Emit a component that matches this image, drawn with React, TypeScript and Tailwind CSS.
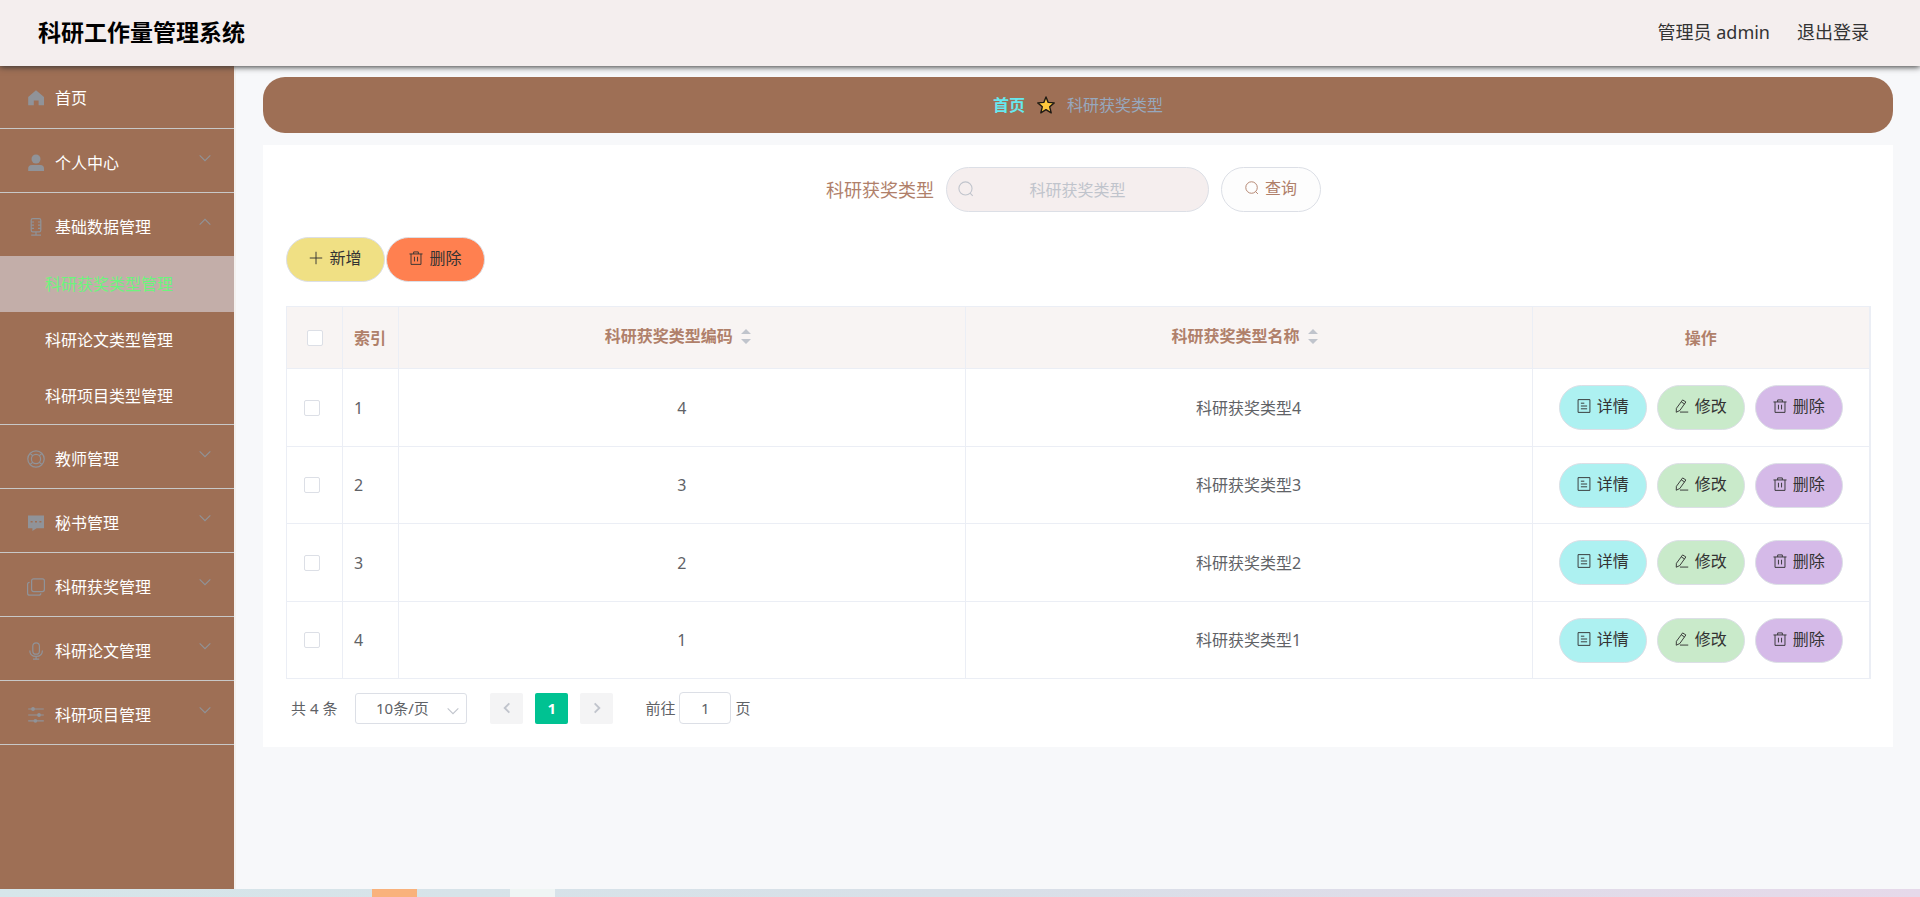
import type { ReactNode } from 'react';

function Svg({ children, className }: { children: ReactNode; className: string }) {
  return (
    <svg viewBox="0 0 18 18" className={className} fill="none" stroke="currentColor" strokeWidth="1.2" aria-hidden="true">
      {children}
    </svg>
  );
}

const icons = {
  home: <path d="M9 1.2 17 8v8.3h-5.4v-4.8H6.8v4.8H1.2V8z" fill="currentColor" stroke="none" />,
  user: (
    <g fill="currentColor" stroke="none">
      <circle cx="9" cy="5" r="4.5" />
      <path d="M1.2 17v-2.4a3.6 3.6 0 0 1 3.6-3.6h8.6a3.6 3.6 0 0 1 3.6 3.6V17z" />
    </g>
  ),
  mic: (
    <>
      <rect x="4.2" y=".6" width="9.6" height="13.2" rx="1.6" />
      <path d="M4.2 4h2.8M4.2 7.2h2.8M4.2 10.4h2.8M13.8 4H11M13.8 7.2H11M13.8 10.4H11M9 13.8v3M4.2 17.2h9.8" />
    </>
  ),
  help: (
    <>
      <circle cx="9" cy="9" r="8.2" />
      <circle cx="9" cy="9" r="4.6" />
      <path d="m3.2 3.6 2.6 2.2M14.8 3.6l-2.6 2.2M3.2 14.4l2.6-2.2M14.8 14.4l-2.6-2.2" />
    </>
  ),
  comment: (
    <path
      fillRule="evenodd"
      d="M1 1.4h16v12.8H9.6L5.4 17v-2.8H1zM3.6 7v1.6h2V7zm4.4 0v1.6h2V7zm4.4 0v1.6h2V7z"
      fill="currentColor"
      stroke="none"
    />
  ),
  copy: (
    <>
      <rect x="4.6" y=".8" width="12.8" height="12.8" rx="2" />
      <path d="M2.6 4.4C1.2 4.4.6 5 .6 6.4v8.8c0 1.4.6 2 2 2h9.2c1.4 0 2-.6 2-2" />
    </>
  ),
  voice: (
    <>
      <rect x="5.8" y=".8" width="6.6" height="11.4" rx="3.3" />
      <path d="M2.8 8.4c0 4 2.6 6 6.3 6s6.3-2 6.3-6M9.1 14.4v2.6M6 17.2h6.2" />
    </>
  ),
  sliders: (
    <>
      <path d="M1.2 3h15.6M1.2 9h15.6M1.2 14.8h15.6" />
      <g fill="currentColor" stroke="none">
        <circle cx="6" cy="3" r="1.9" />
        <circle cx="12" cy="9" r="1.9" />
        <circle cx="8.4" cy="14.8" r="1.9" />
      </g>
    </>
  ),
  search: (
    <>
      <circle cx="8.4" cy="8.4" r="7.4" />
      <path d="m13.6 13.6 3 3" />
    </>
  ),
  plus: <path d="M9 1v16M1 9h16" />,
  trash: <path d="M.6 3.8h16.8M6 3.8V1.2h6v2.6M2.6 3.8v13.4h12.8V3.8M7 7.4v6M11 7.4v6" />,
  detail: <path d="M1.4.8h15.2v16.4H1.4zM5 5.4h4.4M5 9h8M5 12.6h8" />,
  edit: <path d="M9.8 1.2 14 3.8 6.2 14.8 1.6 17l.2-5zM8.2 3.8l4.2 2.6M6.4 16.8H17" />,
  down: <path d="m1 5 8 8 8-8" strokeWidth="1.6" />,
  up: <path d="m1 13 8-8 8 8" strokeWidth="1.6" />,
  left: <path d="m12 3-6 6 6 6" strokeWidth="2.4" />,
  right: <path d="m6 3 6 6-6 6" strokeWidth="2.4" />,
};

type IconName = keyof typeof icons;

const menu: { label: string; icon: IconName; children?: string[] }[] = [
  { label: '个人中心', icon: 'user' },
  {
    label: '基础数据管理',
    icon: 'mic',
    children: ['科研获奖类型管理', '科研论文类型管理', '科研项目类型管理'],
  },
  { label: '教师管理', icon: 'help' },
  { label: '秘书管理', icon: 'comment' },
  { label: '科研获奖管理', icon: 'copy' },
  { label: '科研论文管理', icon: 'voice' },
  { label: '科研项目管理', icon: 'sliders' },
];

const rows = [
  { index: 1, code: 4, name: '科研获奖类型4' },
  { index: 2, code: 3, name: '科研获奖类型3' },
  { index: 3, code: 2, name: '科研获奖类型2' },
  { index: 4, code: 1, name: '科研获奖类型1' },
];

const actions: { label: string; icon: IconName; color: string }[] = [
  { label: '详情', icon: 'detail', color: 'bg-[#adf1f1]' },
  { label: '修改', icon: 'edit', color: 'bg-[#c9eaca]' },
  { label: '删除', icon: 'trash', color: 'bg-[#d5bae8]' },
];

function PillButton({ label, icon, className }: { label: string; icon: IconName; className: string }) {
  return (
    <button
      type="button"
      className={`flex h-[45px] items-center justify-center gap-[6px] rounded-full border border-[#dcdfe6] pb-[3px] text-base ${className}`}
    >
      <Svg className="size-[14px]">{icons[icon]}</Svg>
      {label}
    </button>
  );
}

function Checkbox({ label }: { label: string }) {
  return (
    <input
      type="checkbox"
      aria-label={label}
      className="block size-4 appearance-none rounded-[2px] border border-[#dcdfe6] bg-white checked:bg-[#00c292]"
    />
  );
}

function SortHeader({ label }: { label: string }) {
  return (
    <th className="border border-[#ebeef5] pr-2 pb-1">
      <button type="button" className="inline-flex items-center gap-2 align-middle font-bold">
        {label}
        <svg viewBox="0 0 10 16" className="h-4 w-[10px] fill-[#c0c4cc]" aria-hidden="true">
          <path d="M0 6 5 1l5 5zM0 11l5 5 5-5z" />
        </svg>
      </button>
    </th>
  );
}

function Sidebar() {
  return (
    <nav className="w-[236px] shrink-0 border-r-2 border-[#f3f1ef] bg-[#9e6f55] text-base text-white">
      <ul>
        <li className="border-b border-[#c8c8c8]">
          <a href="#home" className="flex h-[62px] items-center gap-[10px] pt-[2px] pl-[27px]">
            <Svg className="size-[18px] text-[#909399]">{icons.home}</Svg>
            首页
          </a>
        </li>
        {menu.map((item) => (
          <li key={item.label} className="border-b border-[#c8c8c8]">
            <button type="button" className="flex h-[63px] w-full items-center gap-[10px] pt-1 pr-[23px] pl-[27px] text-left">
              <Svg className="size-[18px] text-[#909399]">{icons[item.icon]}</Svg>
              <span className="flex-1">{item.label}</span>
              <Svg className="mb-[10px] size-3 text-[#909399]">{item.children ? icons.up : icons.down}</Svg>
            </button>
            {item.children?.map((child, i) => (
              <a
                key={child}
                href={`#type-${i}`}
                className={`flex h-14 items-center pl-[45px] ${i === 0 ? 'bg-[#c3aea9] text-[#6cf47c]' : ''}`}
              >
                {child}
              </a>
            ))}
          </li>
        ))}
      </ul>
    </nav>
  );
}

function TypeTable() {
  return (
    <table className="mt-6 w-full table-fixed border-collapse border border-r-2 border-[#ebeef5] text-base text-[#606266]">
      <colgroup>
        <col className="w-14" />
        <col className="w-14" />
        <col />
        <col />
        <col className="w-[338px]" />
      </colgroup>
      <thead>
        <tr className="h-[62px] bg-[#f8f4f3] text-[#b0806a]">
          <th className="border border-[#ebeef5] pl-5">
            <Checkbox label="全选" />
          </th>
          <th className="border border-[#ebeef5] pl-[11px] text-left">索引</th>
          <SortHeader label="科研获奖类型编码" />
          <SortHeader label="科研获奖类型名称" />
          <th className="border border-[#ebeef5]">操作</th>
        </tr>
      </thead>
      <tbody>
        {rows.map((row) => (
          <tr key={row.index} className="odd:h-[78px] even:h-[77px]">
            <td className="border border-[#ebeef5] pl-[17px]">
              <Checkbox label={`选择第${row.index}行`} />
            </td>
            <td className="border border-[#ebeef5] pl-[11px]">{row.index}</td>
            <td className="border border-[#ebeef5] text-center">{row.code}</td>
            <td className="border border-[#ebeef5] text-center">{row.name}</td>
            <td className="border border-[#ebeef5]">
              <div className="flex justify-center gap-[10px]">
                {actions.map((action) => (
                  <PillButton
                    key={action.label}
                    label={action.label}
                    icon={action.icon}
                    className={`w-[88px] text-[#333] ${action.color}`}
                  />
                ))}
              </div>
            </td>
          </tr>
        ))}
      </tbody>
    </table>
  );
}

function Pagination() {
  return (
    <div className="mt-[13px] flex h-8 items-center pl-[5px] text-[15px] text-[#606266]">
      <span>共 4 条</span>
      <div className="relative ml-[18px]">
        <select
          aria-label="每页条数"
          className="h-[31px] w-[112px] appearance-none rounded-[3px] border border-[#dcdfe6] bg-white pr-[18px] text-center"
        >
          <option>10条/页</option>
        </select>
        <Svg className="pointer-events-none absolute top-3 right-2 size-3 text-[#c0c4cc]">{icons.down}</Svg>
      </div>
      <div className="ml-[23px] flex gap-3">
        <button type="button" aria-label="上一页" className="flex h-[31px] w-[33px] items-center justify-center rounded-[2px] bg-[#f4f4f5]">
          <Svg className="size-[14px] text-[#c0c4cc]">{icons.left}</Svg>
        </button>
        <button type="button" className="h-[31px] w-[33px] rounded-[2px] bg-[#00c292] font-bold text-white">
          1
        </button>
        <button type="button" aria-label="下一页" className="flex h-[31px] w-[33px] items-center justify-center rounded-[2px] bg-[#f4f4f5]">
          <Svg className="size-[14px] text-[#c0c4cc]">{icons.right}</Svg>
        </button>
      </div>
      <label className="ml-8 flex items-center gap-1">
        前往
        <input
          type="text"
          defaultValue="1"
          className="h-8 w-[52px] rounded-[4px] border border-[#dcdfe6] bg-white text-center"
        />
        页
      </label>
    </div>
  );
}

export default function App() {
  return (
    <div className="flex min-h-screen flex-col bg-[#f7f8fa] font-['Noto_Sans','Noto_Sans_CJK_SC',sans-serif]">
      <header className="z-10 flex h-[66px] items-center justify-between bg-[#f4eeee] pr-[51px] pb-[2px] pl-[38px] shadow-[0_1px_6px_#333]">
        <h1 className="text-[23px] font-bold text-black">科研工作量管理系统</h1>
        <div className="flex gap-[27px] text-lg text-[#333]">
          <span>管理员 admin</span>
          <button type="button">退出登录</button>
        </div>
      </header>

      <div className="flex flex-1">
        <Sidebar />
        <main className="flex-1 px-[27px] pt-[11px]">
          <nav aria-label="面包屑" className="flex h-14 items-center justify-center gap-3 rounded-[22px] bg-[#9e6f55] text-base">
            <a href="#home" className="font-bold text-[#66e8ee]">
              首页
            </a>
            <svg viewBox="0 0 18 18" className="size-[18px]" aria-hidden="true">
              <path
                d="m9 1 2.2 5.4 6 .5-4.5 3.9 1.5 6L9 13.6l-5.2 3.2 1.5-6L.8 6.9l6-.5z"
                fill="#ffc83d"
                stroke="#1f1a14"
                strokeWidth="1.4"
                strokeLinejoin="round"
              />
            </svg>
            <span className="text-[#97a8be]">科研获奖类型</span>
          </nav>

          <section className="mt-3 bg-white pt-[22px] pr-[22px] pb-[23px] pl-[23px]">
            <form className="flex items-center justify-center gap-3 pr-[10px]">
              <label htmlFor="type-name" className="text-lg text-[#b0806a]">
                科研获奖类型
              </label>
              <div className="relative">
                <input
                  id="type-name"
                  type="text"
                  placeholder="科研获奖类型"
                  className="h-[45px] w-[263px] rounded-full border border-[#dcdfe6] bg-[#f5eeee] text-center text-base placeholder:text-[#c0c4cc]"
                />
                <Svg className="absolute top-[14px] left-3 size-4 text-[#c0c4cc]">{icons.search}</Svg>
              </div>
              <PillButton label="查询" icon="search" className="w-[100px] bg-[#fdfdfd] text-[#b0806a]" />
            </form>

            <div className="mt-[25px] flex gap-px">
              <PillButton label="新增" icon="plus" className="w-[99px] bg-[#f0e084] text-[#333]" />
              <PillButton label="删除" icon="trash" className="w-[99px] bg-[#ff8050] text-[#333]" />
            </div>

            <TypeTable />
            <Pagination />
          </section>
        </main>
      </div>

      <footer className="flex h-2 bg-linear-to-r from-[#d6e6ea] via-[#d8e0e8] to-[#e6d9ea]">
        <div className="ml-[372px] w-[45px] bg-[#f9b27c]" />
        <div className="ml-[93px] w-[45px] bg-[#eff5f4]" />
      </footer>
    </div>
  );
}
